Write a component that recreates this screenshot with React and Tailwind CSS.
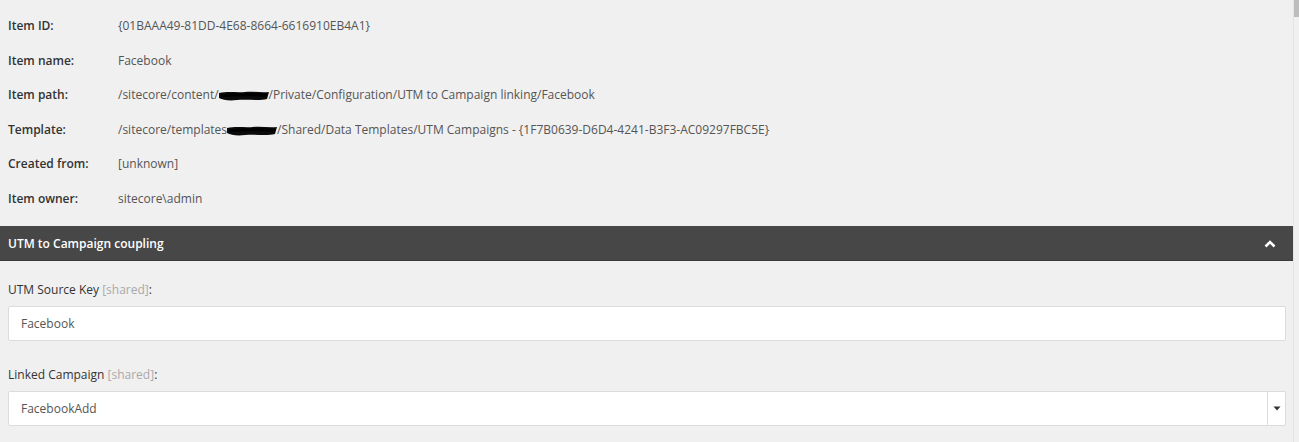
import React from "react";

const info = [
  ["Item ID:", "{01BAAA49-81DD-4E68-8664-6616910EB4A1}"],
  ["Item name:", "Facebook"],
  ["Item path:", "/sitecore/content/", "/Private/Configuration/UTM to Campaign linking/Facebook"],
  ["Template:", "/sitecore/templates", "/Shared/Data Templates/UTM Campaigns - {1F7B0639-D6D4-4241-B3F3-AC09297FBC5E}"],
  ["Created from:", "[unknown]"],
  ["Item owner:", "sitecore\\admin"],
];

// scribbled-out part of the path
const Redacted = () => (
  <svg width="54" height="12" viewBox="0 0 54 12" className="inline-block align-middle -mx-[2px]">
    <path d="M2 3 C12 1 20 3 28 2 C36 1 44 3 52 2 L50 9 C42 11 30 9 20 10 C12 11 6 10 2 8 Z" fill="#0b0b0b" />
    <path d="M4 6 C18 4 34 5 50 5" stroke="#000" strokeWidth="3" fill="none" />
  </svg>
);

export default function App() {
  return (
    <div className="flex w-[1299px] h-[442px] bg-[#f0f0f0] overflow-hidden text-[12px]" style={{ fontFamily: "'Open Sans', 'Liberation Sans', sans-serif" }}>
      <div className="flex-1 flex flex-col">
        {/* общие сведения */}
        <div className="pt-[9px]">
          {info.map((row) => (
            <div key={row[0]} className="flex items-center h-[34.5px] pl-[8px]">
              <div className="w-[110px] font-semibold text-[#333]">{row[0]}</div>
              <div className="text-[#555] whitespace-nowrap">
                {row.length === 3 ? (
                  <>
                    {row[1]}
                    <Redacted />
                    {row[2]}
                  </>
                ) : (
                  row[1]
                )}
              </div>
            </div>
          ))}
        </div>

        {/* секция */}
        <div className="mt-[10px] h-[35px] bg-[#474747] flex items-center justify-between pl-[8px] pr-[17px] pt-[1px] border-b border-[#3a3a3a]">
          <span className="text-white font-semibold">UTM to Campaign coupling</span>
          <svg width="12" height="8" viewBox="0 0 12 8">
            <path d="M1.5 6.5 L6 2 L10.5 6.5" stroke="#fff" strokeWidth="2.6" fill="none" strokeLinejoin="miter" />
          </svg>
        </div>

        <div className="px-[8px] pr-[7px]">
          <div className="mt-[20px] h-[17px] leading-[17px] text-[#333]">
            UTM Source Key <span className="text-[#aaa]">[shared]</span>:
          </div>
          <div className="mt-[8px] h-[35px] bg-white border border-[#dcdcdc] rounded-[2px] flex items-center pl-[12px] pt-[1px] text-[#555]">
            Facebook
          </div>

          <div className="mt-[25px] h-[17px] leading-[17px] text-[#333]">
            Linked Campaign <span className="text-[#aaa]">[shared]</span>:
          </div>
          <div className="mt-[8px] h-[35px] bg-white border border-[#dcdcdc] rounded-[2px] flex items-stretch text-[#555]">
            <div className="flex-1 flex items-center pl-[12px] pt-[1px]">FacebookAdd</div>
            <div className="w-[18px] border-l border-[#dcdcdc] flex items-center justify-center">
              <svg width="8" height="5" viewBox="0 0 8 5">
                <path d="M0.5 0.5 H7.5 L4 4.5 Z" fill="#333" />
              </svg>
            </div>
          </div>
        </div>
      </div>

      {/* полоса прокрутки */}
      <div className="w-[6px] border-l border-[#e4e4e4]">
        <div className="h-[17px] bg-[#bdbdbd]" />
      </div>
    </div>
  );
}
